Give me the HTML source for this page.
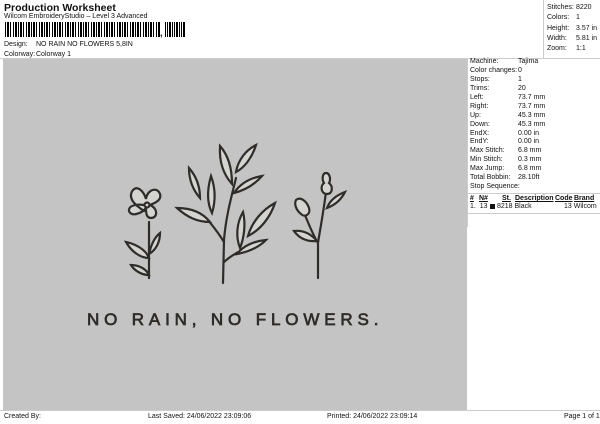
<!DOCTYPE html>
<html><head><meta charset="utf-8"><style>
body{margin:0;width:600px;height:424px;background:#fff;font-family:"Liberation Sans",sans-serif;color:#111;position:relative;overflow:hidden}
.a{position:absolute;white-space:nowrap;font-size:7px}
.bc{position:absolute;left:5px;top:22px;height:15px;width:155px;background:repeating-linear-gradient(90deg,#000 0 1px,#fff 1px 2px,#000 2px 4px,#fff 4px 5px,#000 5px 6px,#fff 6px 8px,#000 8px 9px,#fff 9px 10px,#000 10px 12px,#fff 12px 13px)}
.bc2{position:absolute;left:165px;top:22px;height:15px;width:20px;background:repeating-linear-gradient(90deg,#000 0 1px,#fff 1px 2px,#000 2px 3px,#fff 3px 4px,#000 4px 6px,#fff 6px 7px)}
</style></head><body>
<div class="a" style="left:4px;top:2px;font-size:10.5px;font-weight:bold">Production Worksheet</div>
<div class="a" style="left:4px;top:13px;font-size:7px">Wilcom EmbroideryStudio – Level 3 Advanced</div>
<div class="bc"></div><div class="a" style="left:160px;top:28px;font-size:9px;font-weight:bold">,</div><div class="bc2"></div>
<div class="a" style="left:4px;top:41px">Design:</div><div class="a" style="left:36px;top:41px">NO RAIN NO FLOWERS 5,8IN</div>
<div class="a" style="left:4px;top:51px">Colorway:</div><div class="a" style="left:36px;top:51px">Colorway 1</div>
<div style="position:absolute;left:543px;top:0;width:1px;height:58px;background:#ccc"></div>
<div style="position:absolute;left:0;top:58px;width:600px;height:1px;background:#ccc"></div>
<div class="a" style="left:547px;top:3px;line-height:10.3px">Stitches:<br>Colors:<br>Height:<br>Width:<br>Zoom:</div>
<div class="a" style="left:576px;top:3px;line-height:10.3px">8220<br>1<br>3.57 in<br>5.81 in<br>1:1</div>
<div style="position:absolute;left:3px;top:59px;width:464px;height:351px;background:#c4c4c4"></div>
<div style="position:absolute;left:467px;top:59px;width:1px;height:168px;background:#ccc"></div>
<div class="a" style="left:470px;top:58px;line-height:8.93px">Machine:<br>Color changes:<br>Stops:<br>Trims:<br>Left:<br>Right:<br>Up:<br>Down:<br>EndX:<br>EndY:<br>Max Stitch:<br>Min Stitch:<br>Max Jump:<br>Total Bobbin:<br>Stop Sequence:</div>
<div class="a" style="left:518px;top:58px;line-height:8.93px">Tajima<br>0<br>1<br>20<br>73.7 mm<br>73.7 mm<br>45.3 mm<br>45.3 mm<br>0.00 in<br>0.00 in<br>6.8 mm<br>0.3 mm<br>6.8 mm<br>28.10ft</div>
<div style="position:absolute;left:468px;top:193px;width:132px;height:1px;background:#ccc"></div>
<div class="a" style="left:470px;top:195px;font-weight:bold;text-decoration:underline">#</div>
<div class="a" style="left:479px;top:195px;font-weight:bold;text-decoration:underline">N#</div>
<div class="a" style="left:502px;top:195px;font-weight:bold;text-decoration:underline">St.</div>
<div class="a" style="left:515px;top:195px;font-weight:bold;text-decoration:underline">Description</div>
<div class="a" style="left:555px;top:195px;font-weight:bold;text-decoration:underline">Code</div>
<div class="a" style="left:574px;top:195px;font-weight:bold;text-decoration:underline">Brand</div>
<div class="a" style="left:470px;top:203px">1.&nbsp; 13</div>
<div style="position:absolute;left:490px;top:204px;width:5px;height:5px;background:#111"></div>
<div class="a" style="left:497px;top:203px">8218 Black</div>
<div class="a" style="left:564px;top:203px">13 Wilcom</div>
<div style="position:absolute;left:468px;top:213px;width:132px;height:1px;background:#ccc"></div>
<div style="position:absolute;left:0;top:410px;width:600px;height:1px;background:#ccc"></div>
<div class="a" style="left:4px;top:413px">Created By:</div>
<div class="a" style="left:148px;top:413px">Last Saved: 24/06/2022 23:09:06</div>
<div class="a" style="left:327px;top:413px">Printed: 24/06/2022 23:09:14</div>
<div class="a" style="left:564px;top:413px">Page 1 of 1</div>
<svg style="position:absolute;left:0;top:0" width="600" height="424" fill="#d4d4d0" stroke="#2f2d2a" stroke-width="2.2" stroke-linecap="round">
<path d="M149 278 L149 222 M144 211 C135 205 127 198 133 190 C138 185 144 192 146 199 C147 190 157 186 160 194 C162 200 155 203 150 205 C158 208 158 218 151 218 C146 218 146 212 146 208 C141 214 131 217 129 211 C128 205 138 204 144 205"/>
<circle cx="147" cy="205" r="2.5"/>
<path d="M126 242 C136 244 146 250 149 258 C140 258 131 251 126 242Z"/>
<path d="M131 265 C140 265 147 270 149 275 C141 275 134 270 131 265Z"/>
<path d="M149 254 C151 245 155 237 160 233 C160 242 156 250 149 254Z"/>
<path d="M223 283 L224 240 C226 215 232 195 236 178" fill="none"/>
<path d="M224 242 C218 232 212 225 208 220 M224 262 C235 252 248 247 262 243" fill="none"/>
<path d="M220 146 C228 155 232 168 232 184 C224 175 219 162 220 146Z"/>
<path d="M256 145 C252 158 244 168 236 172 C238 160 246 150 256 145Z"/>
<path d="M262 176 C255 184 246 190 234 193 C240 184 250 178 262 176Z"/>
<path d="M189 168 C196 176 200 186 200 198 C193 190 189 180 189 168Z"/>
<path d="M211 176 C215 187 216 200 212 213 C207 203 207 190 211 176Z"/>
<path d="M177 208 C190 208 202 212 210 222 C197 222 187 217 177 208Z"/>
<path d="M275 203 C270 218 260 230 248 236 C252 222 262 210 275 203Z"/>
<path d="M243 212 C246 224 244 238 240 248 C236 238 236 224 243 212Z"/>
<path d="M266 240 C258 248 248 252 237 254 C243 246 254 241 266 240Z"/>
<path d="M318 278 L318 243 C320 230 323 215 326 192 M318 243 C313 235 309 225 305 215" fill="none"/>
<path d="M326 173 C322 173 322 180 324 183 C320 186 321 194 327 194 C333 194 333 186 329 183 C331 180 330 173 326 173Z"/>
<path d="M296 200 C301 196 307 202 309 208 C311 214 305 218 301 214 C296 210 294 204 296 200Z"/>
<path d="M345 192 C341 200 335 205 327 208 C330 200 337 195 345 192Z"/>
<path d="M294 231 C303 230 311 234 317 241 C306 242 299 238 294 231Z"/>
</svg>
<div class="a" style="left:87px;top:310px;font-size:17px;letter-spacing:4.85px;color:#2f2d2a;-webkit-text-stroke:0.7px #2f2d2a">NO RAIN, NO FLOWERS.</div>
</body></html>
